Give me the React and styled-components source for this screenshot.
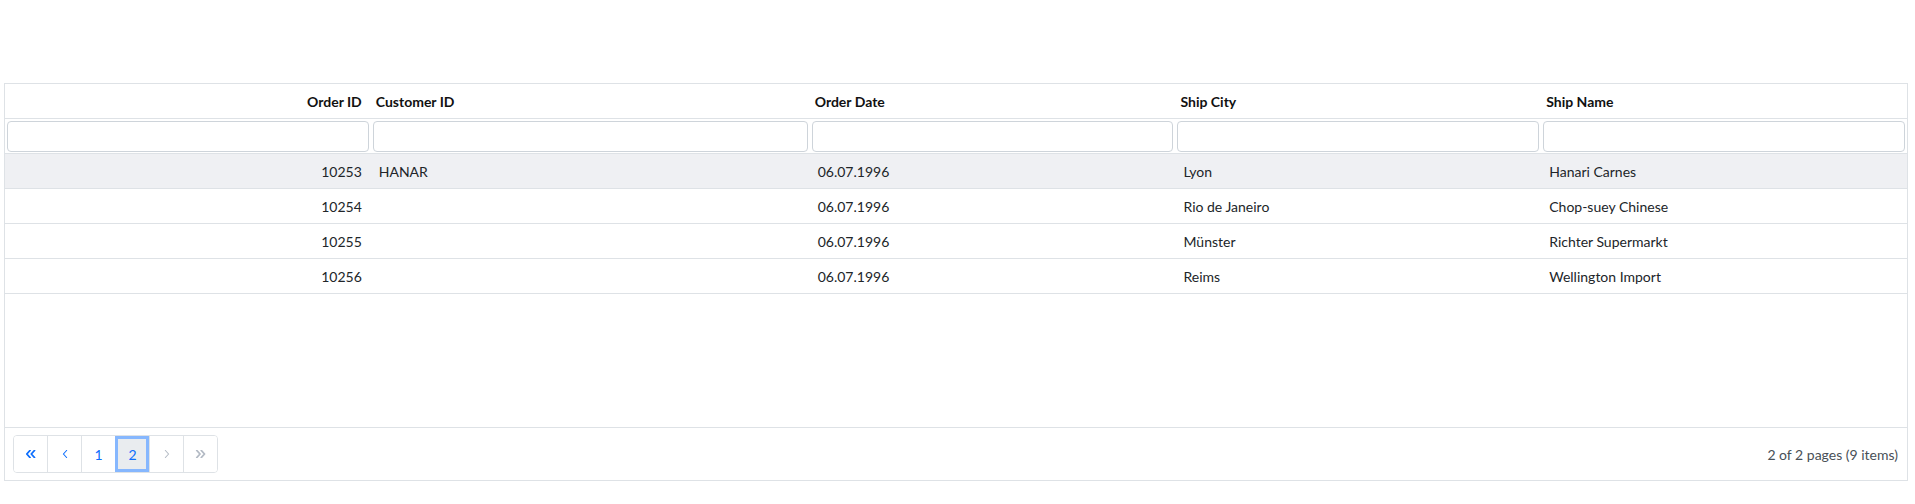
import React from 'react';
import styled, { createGlobalStyle } from 'styled-components';

const GlobalStyle = createGlobalStyle`
  html, body { margin: 0; padding: 0; background: #fff; }
  body { font-family: "Segoe UI", Lato, "Liberation Sans", sans-serif; }
  * { box-sizing: border-box; }
`;

const Page = styled.div`
  padding: 83px 7px 24px 4px;
`;

const Grid = styled.div`
  border: 1px solid #dee2e6;
  display: flex;
  flex-direction: column;
  color: #212529;
  font-size: 14px;
`;

const Row = styled.div`
  display: grid;
  grid-template-columns: 1fr 1.2fr 1fr 1fr 1fr;
  height: 35px;
  border-bottom: 1px solid #dee2e6;
  background: ${(p) => (p.$selected ? '#eff0f3' : '#fff')};
`;

const HeaderCell = styled.div`
  display: flex;
  align-items: center;
  justify-content: ${(p) => (p.$right ? 'flex-end' : 'flex-start')};
  padding: 0 9px 0 5px;
  font-weight: 700;
  color: #111;
  white-space: nowrap;
`;

const FilterCell = styled.div`
  display: flex;
  align-items: center;
  padding: 0 2px;
`;

const FilterInput = styled.input`
  width: 100%;
  height: 31px;
  border: 1px solid #ced4da;
  border-radius: 4px;
  background: #fff;
  font: inherit;
  padding: 0 8px;
  outline: none;
`;

const Cell = styled.div`
  display: flex;
  align-items: center;
  justify-content: ${(p) => (p.$right ? 'flex-end' : 'flex-start')};
  padding: 1px 9px 0 8px;
  white-space: nowrap;
  overflow: hidden;
`;

const EmptyArea = styled.div`
  height: 133px;
`;

const PagerBar = styled.div`
  height: 53px;
  border-top: 1px solid #dee2e6;
  display: flex;
  align-items: center;
  justify-content: space-between;
  padding: 0 9px 0 8px;
`;

const PageGroup = styled.div`
  display: flex;
  border: 1px solid #dee2e6;
  border-radius: 4px;
  overflow: hidden;
`;

const PageButton = styled.button`
  width: 34px;
  height: 36px;
  border: none;
  border-left: 1px solid #dee2e6;
  &:first-child { border-left: none; width: 33px; }
  background: ${(p) => (p.$active ? '#e9ecef' : '#fff')};
  color: ${(p) => (p.$disabled ? '#b3bac4' : '#0d6efd')};
  font-family: inherit;
  font-size: 14px;
  padding: 0;
  cursor: pointer;
  display: flex;
  align-items: center;
  justify-content: center;
  outline: ${(p) => (p.$active ? '3px solid #86b7fe' : 'none')};
  outline-offset: -3px;
`;

const PageInfo = styled.div`
  color: #495057;
  font-size: 14px;
`;

const Chevron = ({ dir = 'left', double = false, bold = false }) => {
  const w = double ? 11 : 6;
  const sw = bold ? 1.8 : 1.1;
  const paths = [];
  const one = (x) =>
    dir === 'left' ? `M${x + 4} 0.5 L${x + 0.8} 4 L${x + 4} 7.5` : `M${x + 0.8} 0.5 L${x + 4} 4 L${x + 0.8} 7.5`;
  if (double) {
    paths.push(one(1), one(5.5));
  } else {
    paths.push(one(0.6));
  }
  return (
    <svg width={w} height="8" viewBox={`0 0 ${w} 8`} fill="none" stroke="currentColor" strokeWidth={sw} strokeLinecap="round" strokeLinejoin="round">
      {paths.map((d, i) => (
        <path key={i} d={d} />
      ))}
    </svg>
  );
};

const columns = [
  { key: 'id', title: 'Order ID', right: true },
  { key: 'customer', title: 'Customer ID' },
  { key: 'date', title: 'Order Date' },
  { key: 'city', title: 'Ship City' },
  { key: 'name', title: 'Ship Name' },
];

const rows = [
  { id: '10253', customer: 'HANAR', date: '06.07.1996', city: 'Lyon', name: 'Hanari Carnes' },
  { id: '10254', customer: '', date: '06.07.1996', city: 'Rio de Janeiro', name: 'Chop-suey Chinese' },
  { id: '10255', customer: '', date: '06.07.1996', city: 'Münster', name: 'Richter Supermarkt' },
  { id: '10256', customer: '', date: '06.07.1996', city: 'Reims', name: 'Wellington Import' },
];

export default function App() {
  return (
    <>
      <GlobalStyle />
      <Page>
        <Grid>
          <Row>
            {columns.map((c) => (
              <HeaderCell key={c.key} $right={c.right}>{c.title}</HeaderCell>
            ))}
          </Row>
          <Row>
            {columns.map((c) => (
              <FilterCell key={c.key}>
                <FilterInput type="text" />
              </FilterCell>
            ))}
          </Row>
          {rows.map((r, i) => (
            <Row key={r.id} $selected={i === 0}>
              {columns.map((c) => (
                <Cell key={c.key} $right={c.right}>{r[c.key]}</Cell>
              ))}
            </Row>
          ))}
          <EmptyArea />
          <PagerBar>
            <PageGroup>
              <PageButton aria-label="First page"><Chevron dir="left" double bold /></PageButton>
              <PageButton aria-label="Previous page"><Chevron dir="left" /></PageButton>
              <PageButton>1</PageButton>
              <PageButton $active>2</PageButton>
              <PageButton $disabled aria-label="Next page"><Chevron dir="right" /></PageButton>
              <PageButton $disabled aria-label="Last page"><Chevron dir="right" double bold /></PageButton>
            </PageGroup>
            <PageInfo>2 of 2 pages (9 items)</PageInfo>
          </PagerBar>
        </Grid>
      </Page>
    </>
  );
}
